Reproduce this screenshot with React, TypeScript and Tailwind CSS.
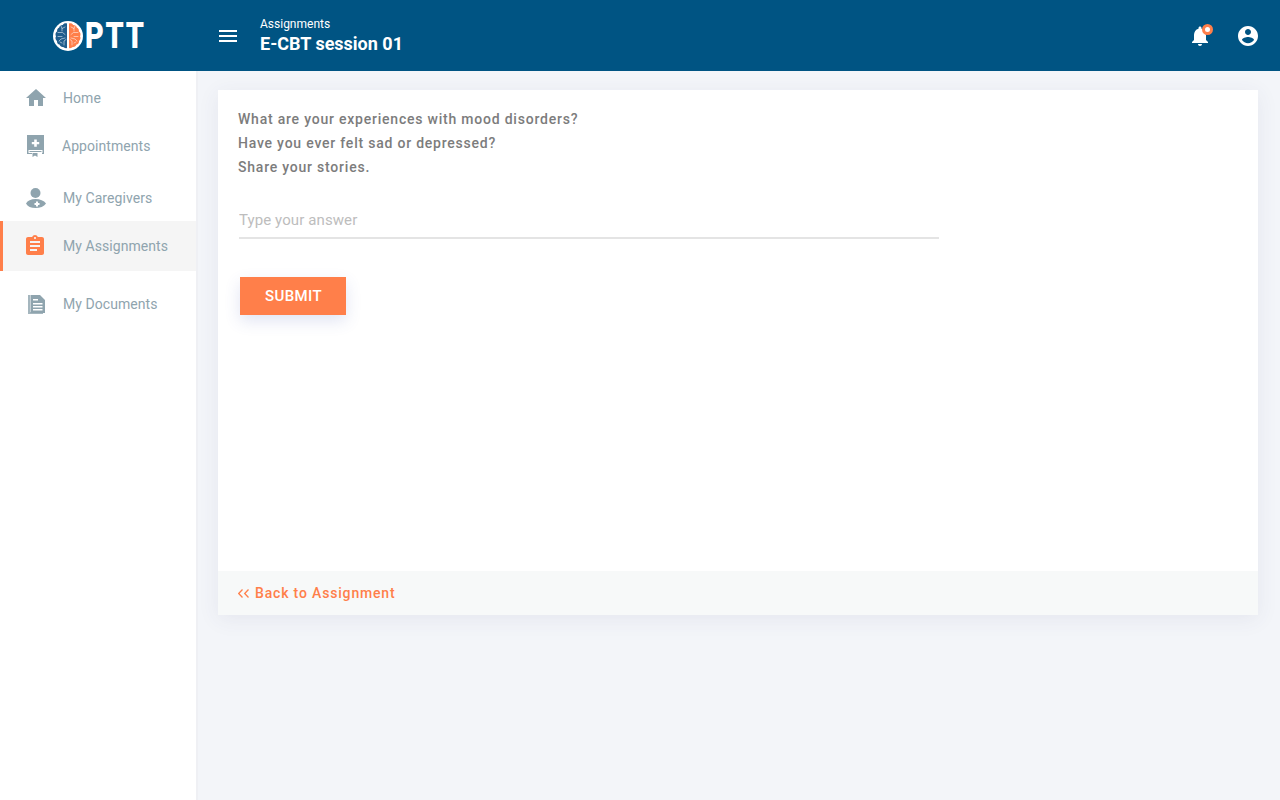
import React from 'react'

type IconProps = { className?: string }

const Icon = ({ d, className }: IconProps & { d: string }) => (
  <svg viewBox="0 0 24 24" fill="currentColor" className={className}>
    <path d={d} />
  </svg>
)

const HomeIcon = ({ className }: IconProps) => <Icon className={className} d="M10 20v-6h4v6h5v-8h3L12 3 2 12h3v8z" />
const AssignmentIcon = ({ className }: IconProps) => (
  <Icon
    className={className}
    d="M19 3h-4.180C14.400 1.840 13.300 1 12 1c-1.300 0-2.400.84-2.820 2H5c-1.100 0-2 .9-2 2v14c0 1.100.9 2 2 2h14c1.100 0 2-.9 2-2V5c0-1.100-.9-2-2-2zm-7 0c.55 0 1 .45 1 1s-.45 1-1 1-1-.45-1-1 .45-1 1-1zm2 14H7v-2h7v2zm3-4H7v-2h10v2zm0-4H7V7h10v2z"
  />
)

const AppointmentIcon = ({ className }: IconProps) => (
  <svg viewBox="0 0 17 22" className={className}>
    <path fill="currentColor" fillRule="evenodd" d="M0 0h17v19h-2v-1h.5v-3h-14v3H5v1H0zM7.200 4.500h2.600v2.400h2.400v2.400H9.800v2.400H7.200V9.300H4.800V6.900h2.400z" />
    <path fill="currentColor" d="M2.500 16h12v1h-12zM5.500 18h5v4l-2.500-1.400L5.500 22z" />
  </svg>
)

const CaregiverIcon = ({ className }: IconProps) => (
  <svg viewBox="0 0 20 20" className={className}>
    <ellipse cx="9.500" cy="5" rx="5" ry="5" fill="currentColor" />
    <path fill="currentColor" d="M0 15.500C1.500 12.500 5 11 9.500 11s8.500 1.500 10.500 4.500C18 18.500 14 20 9.500 20S1.500 18.500 0 15.500z" />
    <path fill="#fff" d="M10 13.500h2v1.500h1.500v2H12v1.500h-2V17H8.500v-2H10z" />
  </svg>
)

const DocumentIcon = ({ className }: IconProps) => (
  <svg viewBox="0 0 17 19" className={className}>
    <path fill="currentColor" fillOpacity="0.8" d="M0 0h2v17h13v2H0z" />
    <path fill="currentColor" fillRule="evenodd" d="M2.500 0h9.500l5 5v13H2.500zM5 4v1.500h5V4zm0 4v1.500h9.500V8zm0 3v1.500h9.500V11zm0 3v1.500h9.500V14z" />
  </svg>
)

const BrainLogo = () => (
  <svg viewBox="0 0 30 30" className="h-[30px] w-[30px] shrink-0">
    <circle cx="15" cy="15" r="15" fill="#fff" />
    <path
      fill="#1f5d8c"
      d="M14 2.500c-2-.5-3.500.2-4.200 1.400-1.900-.1-3.300 1-3.600 2.500C4.500 7.100 3.700 8.800 4.200 10.300 2.500 11.500 2 13.600 3 15.200c-1 1.700-.5 3.600 1 4.700-.2 1.800.9 3.300 2.500 3.700.6 1.700 2 2.700 3.700 2.400 1 1 2.400 1.500 3.800 1z"
    />
    <path
      fill="#ff7f4a"
      d="M16 2.500c2-.5 3.500.2 4.200 1.400 1.900-.1 3.300 1 3.600 2.500 1.700.7 2.500 2.400 2 3.900 1.700 1.200 2.200 3.300 1.200 4.900 1 1.700.5 3.600-1 4.700.2 1.800-.9 3.300-2.500 3.700-.6 1.700-2 2.700-3.700 2.400-1 1-2.400 1.500-3.800 1z"
    />
    <g fill="none" stroke="#fff" strokeWidth="0.7" strokeOpacity="0.75" strokeLinecap="round">
      <path d="M12 6l-3 1.500V10M5 11.500h4.500l2.500 2M12 17l-4 1-2 2M11 24v-4l2-1.500M8 5l1 2.500M5 15.500h4M9 22l-2-1" />
      <path d="M18 6l3 1.500V10M25 11.500h-4.500l-2.500 2M18 17l4 1 2 2M19 24v-4l-2-1.500M22 5l-1 2.500M25 15.500h-4M21 22l2-1" />
    </g>
  </svg>
)

const NavItem = ({
  icon,
  label,
  active,
  className,
  labelClassName,
}: {
  icon: React.ReactNode
  label: string
  active?: boolean
  className: string
  labelClassName?: string
}) => (
  <a
    href="#"
    className={`flex items-center border-l-[3px] text-[14px] tracking-[0.06px] text-[#8fa4ae] ${
      active ? 'border-[#ff7f4a] bg-[#f5f5f5]' : 'border-transparent'
    } ${className}`}
  >
    <span className="flex w-[60px] shrink-0 items-center justify-center pl-[6px]">{icon}</span>
    <span className={labelClassName}>{label}</span>
  </a>
)

const App = () => {
  return (
    <div className="flex h-[800px] flex-col overflow-hidden bg-[#f3f5f9] font-['Roboto',sans-serif]">
      {/* Header */}
      <header className="relative z-20 flex h-[71px] shrink-0 items-center bg-[#005483] text-white">
        <div className="flex w-[198px] items-center pl-[53px]">
          <BrainLogo />
          <span className="ml-[2px] origin-left scale-x-[0.78] text-[37px] leading-none font-black tracking-[2.2px]">
            PTT
          </span>
        </div>
        <button className="ml-[21px] text-white">
          <svg viewBox="0 0 18 12" fill="currentColor" className="h-[12px] w-[18px]">
            <path d="M0 0h18v2H0zM0 5h18v2H0zM0 10h18v2H0z" />
          </svg>
        </button>
        <div className="ml-[23px] flex flex-col pt-[1px]">
          <span className="text-[12px] leading-[16px]">Assignments</span>
          <span className="text-[18px] leading-[24px] font-bold">E-CBT session 01</span>
        </div>
        <div className="ml-auto flex items-center gap-[24px] pr-[20px]">
          <div className="relative h-[24px] w-[24px]">
            <Icon className="h-[24px] w-[24px]" d="M12 22c1.100 0 2-.9 2-2h-4c0 1.100.89 2 2 2zm6-6v-5c0-3.070-1.640-5.640-4.500-6.320V4c0-.83-.67-1.500-1.500-1.500s-1.500.67-1.500 1.500v.68C7.630 5.360 6 7.920 6 11v5l-2 2v1h16v-1l-2-2z" />
            <span className="absolute top-0 right-[-1px] h-[11px] w-[11px] rounded-full border-[3px] border-[#ff7f4a] bg-white" />
          </div>
          <Icon
            className="h-[24px] w-[24px]"
            d="M12 2C6.480 2 2 6.480 2 12s4.480 10 10 10 10-4.480 10-10S17.520 2 12 2zm0 3c1.660 0 3 1.340 3 3s-1.340 3-3 3-3-1.340-3-3 1.340-3 3-3zm0 14.200c-2.500 0-4.710-1.280-6-3.220.03-1.990 4-3.080 6-3.080 1.990 0 5.970 1.090 6 3.080-1.290 1.940-3.500 3.220-6 3.220z"
          />
        </div>
      </header>

      <div className="flex min-h-0 flex-1">
        {/* Sidebar */}
        <aside className="flex w-[198px] shrink-0 flex-col border-r-2 border-[#eff0f4] bg-white pt-[3px]">
          <NavItem className="h-[48px]" icon={<HomeIcon className="h-[24px] w-[24px]" />} label="Home" />
          <NavItem
            className="h-[48px]"
            labelClassName="-ml-[1px]"
            icon={<AppointmentIcon className="h-[22px] w-[17px] -translate-x-px" />}
            label="Appointments"
          />
          <NavItem
            className="mt-[4px] h-[47px] pt-[1px]"
            icon={<CaregiverIcon className="h-[20px] w-[20px]" />}
            label="My Caregivers"
          />
          <NavItem
            active
            className="h-[50px]"
            icon={<AssignmentIcon className="h-[24px] w-[24px] -translate-x-px text-[#ff7f4a]" />}
            label="My Assignments"
          />
          <NavItem
            className="mt-[8px] h-[50px]"
            icon={<DocumentIcon className="h-[19px] w-[17px]" />}
            label="My Documents"
          />
        </aside>

        {/* Content */}
        <main className="min-w-0 flex-1 pt-[19px] pr-[22px] pl-[20px]">
          <section className="flex h-[525px] flex-col bg-white shadow-[0_4px_20px_rgba(60,70,110,0.08)]">
            <div className="flex-1 px-[20px] pt-[17px]">
              <p className="text-[14px] leading-[24px] font-medium tracking-[0.78px] text-[#7c7c7c]">
                What are your experiences with mood disorders?
                <br />
                Have you ever felt sad or depressed?
                <br />
                Share your stories.
              </p>
              <input
                placeholder="Type your answer"
                className="mt-[22px] ml-[1px] block h-[38px] w-[700px] border-b-2 border-[#e4e4e4] pt-[2px] text-[15px] tracking-[0.1px] outline-none placeholder:text-[#bdbdbd]"
              />
              <button className="mt-[38px] ml-[2px] h-[38px] w-[106px] bg-[#ff7f4a] pl-[1px] text-[15px] font-medium tracking-[0.4px] text-white shadow-[0_6px_16px_rgba(70,90,180,0.16)]">
                SUBMIT
              </button>
            </div>
            <div className="flex h-[44px] items-center bg-[#f7f9f9] px-[20px] text-[14px] font-medium tracking-[0.83px] text-[#ff7f4a]">
              <svg viewBox="0 0 11 9" fill="none" stroke="currentColor" strokeWidth="1.3" className="mr-[6px] h-[9px] w-[11px]">
                <path d="M4.500 0.500L0.700 4.500l3.800 4M10.500 0.500L6.700 4.500l3.800 4" />
              </svg>
              Back to Assignment
            </div>
          </section>
        </main>
      </div>
    </div>
  )
}

export default App
